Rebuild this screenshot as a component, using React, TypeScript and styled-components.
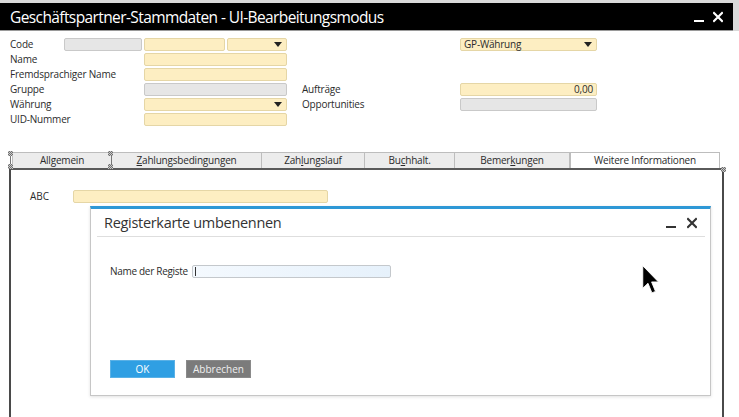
import React from 'react';
import styled, { createGlobalStyle, css } from 'styled-components';

const Global = createGlobalStyle`
  html, body { margin: 0; padding: 0; background: #ffffff; }
  body { font-family: "Open Sans", "Noto Sans", "DejaVu Sans", sans-serif; }
  * { box-sizing: border-box; }
`;

const Screen = styled.div`
  position: relative;
  width: 739px;
  height: 417px;
  overflow: hidden;
  background: #ffffff;
  color: #2b2b2b;
`;

const TitleRow = styled.div`
  display: flex;
  background: #d9d9d9;
  padding-top: 3px;
`;

const TitleBar = styled.div`
  width: 733px;
  height: 28px;
  background: #000;
  color: #fff;
  display: flex;
  align-items: center;
  justify-content: space-between;
  padding: 0 10px 0 10px;
  border-bottom: 1px solid #9a9a9a;
`;

const TitleText = styled.span`
  font-size: 15.5px;
  letter-spacing: -0.6px;
  white-space: nowrap;
`;

const WinControls = styled.div`
  display: flex;
  align-items: center;
  gap: 9px;
`;

const HeaderGrid = styled.div`
  display: grid;
  grid-template-columns: 54px 78px 2px 81px 2px 60px 15px 158px 137px;
  grid-template-rows: repeat(6, 13px);
  row-gap: 2px;
  margin: 7px 0 0 10px;
`;

const Label = styled.span<{ $col?: string; $row: number }>`
  grid-column: ${(p) => p.$col || '1 / 4'};
  grid-row: ${(p) => p.$row};
  font-size: 10px;
  letter-spacing: -0.2px;
  line-height: 13px;
  white-space: nowrap;
  color: #2b2b2b;
`;

const toneCss = {
  yellow: css`
    background: #fdeec2;
    border-color: #e5d6a6;
  `,
  grey: css`
    background: #e6e6e6;
    border-color: #c9c9c9;
  `,
  blue: css`
    background: linear-gradient(to right, #f4f9fe, #e6f1fb);
    border-color: #c4c8cc;
  `,
};

const Field = styled.div<{ $tone: 'yellow' | 'grey' | 'blue'; $col?: string; $row?: number; $right?: boolean }>`
  grid-column: ${(p) => p.$col || 'auto'};
  grid-row: ${(p) => p.$row || 'auto'};
  height: 13px;
  border: 1px solid;
  ${(p) => toneCss[p.$tone]};
  border-radius: 2px;
  font-size: 10px;
  letter-spacing: -0.2px;
  line-height: 11px;
  padding: 0 3px;
  display: flex;
  align-items: center;
  justify-content: ${(p) => (p.$right ? 'flex-end' : 'space-between')};
  color: #2b2b2b;
  white-space: nowrap;
`;

const Caret = styled.span`
  width: 0;
  height: 0;
  border-left: 4px solid transparent;
  border-right: 4px solid transparent;
  border-top: 5px solid #222;
  margin-right: 1px;
`;

const TabStrip = styled.div`
  display: flex;
  margin: 26px 0 0 12px;
  height: 16px;
`;

const Tab = styled.div<{ $w: number; $active?: boolean }>`
  width: ${(p) => p.$w}px;
  height: 16px;
  background: ${(p) => (p.$active ? '#ffffff' : '#ececec')};
  border: 1px solid #bdbdbd;
  border-bottom: none;
  border-left-width: ${(p) => (p.$active ? 1 : 0)}px;
  &:first-child { border-left-width: 1px; }
  font-size: 10px;
  letter-spacing: -0.2px;
  line-height: 15px;
  text-align: center;
  color: #2b2b2b;
  white-space: nowrap;
`;

const Panel = styled.div`
  margin-left: 9px;
  width: 715px;
  height: 260px;
  border: 2px solid #4a4a4a;
  border-bottom: none;
  border-top-color: #5a5a5a;
  padding: 20px 0 0 19px;
`;

const PanelRow = styled.div`
  display: flex;
  align-items: center;
`;

const PanelLabel = styled.span`
  width: 43px;
  font-size: 10px;
  line-height: 13px;
  color: #2b2b2b;
`;

const WideField = styled(Field)`
  width: 255px;
`;

const Handle = styled.div<{ $x: number; $y: number }>`
  position: absolute;
  left: ${(p) => p.$x}px;
  top: ${(p) => p.$y}px;
  width: 5px;
  height: 5px;
  background-color: #9a9a9a;
  background-image: repeating-conic-gradient(#6e6e6e 0% 25%, #c8c8c8 0% 50%);
  background-size: 2px 2px;
`;

const SelectionSide = styled.div<{ $x: number }>`
  position: absolute;
  left: ${(p) => p.$x}px;
  top: 153px;
  width: 1px;
  height: 16px;
  background: #777;
`;

const Dialog = styled.div`
  position: absolute;
  left: 90px;
  top: 206px;
  width: 621px;
  height: 190px;
  background: #fff;
  border: 1px solid #c6c6c6;
  border-top: 3px solid #2e98d6;
  box-shadow: 0 1px 3px rgba(0, 0, 0, 0.12);
  display: flex;
  flex-direction: column;
`;

const DialogHead = styled.div`
  height: 28px;
  margin: 0 5px 0 6px;
  border-bottom: 1px solid #dedede;
  display: flex;
  align-items: center;
  justify-content: space-between;
  padding: 0 8px 0 7px;
`;

const DialogTitle = styled.span`
  font-size: 14.5px;
  letter-spacing: -0.3px;
  color: #333;
  white-space: nowrap;
`;

const DialogControls = styled.div`
  display: flex;
  align-items: center;
  gap: 11px;
`;

const DialogBody = styled.div`
  padding: 27px 0 0 19px;
  display: flex;
  flex-direction: column;
`;

const InputRow = styled.div`
  display: flex;
  align-items: center;
`;

const InputLabel = styled.span`
  width: 82px;
  font-size: 10px;
  letter-spacing: -0.3px;
  color: #2b2b2b;
  white-space: nowrap;
`;

const TextInput = styled(Field)`
  width: 199px;
  justify-content: flex-start;
  padding-left: 2px;
`;

const TextCaret = styled.span`
  width: 1px;
  height: 9px;
  background: #333;
`;

const ButtonRow = styled.div`
  display: flex;
  gap: 11px;
  margin-top: 82px;
`;

const Button = styled.div<{ $primary?: boolean }>`
  width: 65px;
  height: 18px;
  background: ${(p) => (p.$primary ? '#2f9fe3' : '#7b7b7b')};
  border: 1px solid ${(p) => (p.$primary ? '#5ab1e6' : '#8a8a8a')};
  color: ${(p) => (p.$primary ? '#ffffff' : '#efefef')};
  font-size: 10px;
  line-height: 16px;
  text-align: center;
`;

const Pointer = styled.svg`
  position: absolute;
  left: 642px;
  top: 265px;
`;

const MinIcon = ({ color = '#fff', w = 10 }: { color?: string; w?: number }) => (
  <svg width={w} height="12" viewBox={`0 0 ${w} 12`}>
    <rect x="0" y="9" width={w} height="2" fill={color} />
  </svg>
);

const CloseIcon = ({ color = '#fff' }: { color?: string }) => (
  <svg width="10" height="12" viewBox="0 0 10 12">
    <path d="M1 2 L9 10 M9 2 L1 10" stroke={color} strokeWidth="2.2" strokeLinecap="square" />
  </svg>
);

export default function App() {
  return (
    <>
      <Global />
      <Screen>
        <TitleRow>
          <TitleBar>
            <TitleText>Geschäftspartner-Stammdaten - UI-Bearbeitungsmodus</TitleText>
            <WinControls>
              <MinIcon />
              <CloseIcon />
            </WinControls>
          </TitleBar>
        </TitleRow>

        <HeaderGrid>
          <Label $col="1" $row={1}>Code</Label>
          <Field $tone="grey" $col="2" $row={1} />
          <Field $tone="yellow" $col="4" $row={1} />
          <Field $tone="yellow" $col="6" $row={1}>
            <span />
            <Caret />
          </Field>
          <Field $tone="yellow" $col="9" $row={1}>
            <span>GP-Währung</span>
            <Caret />
          </Field>

          <Label $row={2}>Name</Label>
          <Field $tone="yellow" $col="4 / 7" $row={2} />

          <Label $row={3}>Fremdsprachiger Name</Label>
          <Field $tone="yellow" $col="4 / 7" $row={3} />

          <Label $row={4}>Gruppe</Label>
          <Field $tone="grey" $col="4 / 7" $row={4} />
          <Label $col="8" $row={4}>Aufträge</Label>
          <Field $tone="yellow" $col="9" $row={4} $right>0,00</Field>

          <Label $row={5}>Währung</Label>
          <Field $tone="yellow" $col="4 / 7" $row={5}>
            <span />
            <Caret />
          </Field>
          <Label $col="8" $row={5}>Opportunities</Label>
          <Field $tone="grey" $col="9" $row={5} />

          <Label $row={6}>UID-Nummer</Label>
          <Field $tone="yellow" $col="4 / 7" $row={6} />
        </HeaderGrid>

        <TabStrip>
          <Tab $w={100}>Allgemein</Tab>
          <Tab $w={150}><u>Z</u>ahlungsbedingungen</Tab>
          <Tab $w={103}>Zah<u>l</u>ungslauf</Tab>
          <Tab $w={90}>Bu<u>c</u>hhalt.</Tab>
          <Tab $w={115}>Bemer<u>k</u>ungen</Tab>
          <Tab $w={150} $active>Weitere Informationen</Tab>
        </TabStrip>

        <Panel>
          <PanelRow>
            <PanelLabel>ABC</PanelLabel>
            <WideField $tone="yellow" />
          </PanelRow>
        </Panel>

        <SelectionSide $x={10} />
        <SelectionSide $x={111} />
        <Handle $x={8} $y={151} />
        <Handle $x={108} $y={151} />
        <Handle $x={8} $y={164} />
        <Handle $x={108} $y={164} />
        <Handle $x={721} $y={167} />

        <Dialog>
          <DialogHead>
            <DialogTitle>Registerkarte umbenennen</DialogTitle>
            <DialogControls>
              <MinIcon color="#333" w={10} />
              <CloseIcon color="#333" />
            </DialogControls>
          </DialogHead>
          <DialogBody>
            <InputRow>
              <InputLabel>Name der Registe</InputLabel>
              <TextInput $tone="blue">
                <TextCaret />
              </TextInput>
            </InputRow>
            <ButtonRow>
              <Button $primary>OK</Button>
              <Button>Abbrechen</Button>
            </ButtonRow>
          </DialogBody>
        </Dialog>

        <Pointer width="18" height="30" viewBox="0 0 12 20">
          <path
            d="M0.5 0.5 L0.5 15.5 L4 12.2 L6.6 18.6 L9 17.6 L6.4 11.3 L11 11.3 Z"
            fill="#000"
            stroke="#fff"
            strokeWidth="0.6"
          />
        </Pointer>
      </Screen>
    </>
  );
}
